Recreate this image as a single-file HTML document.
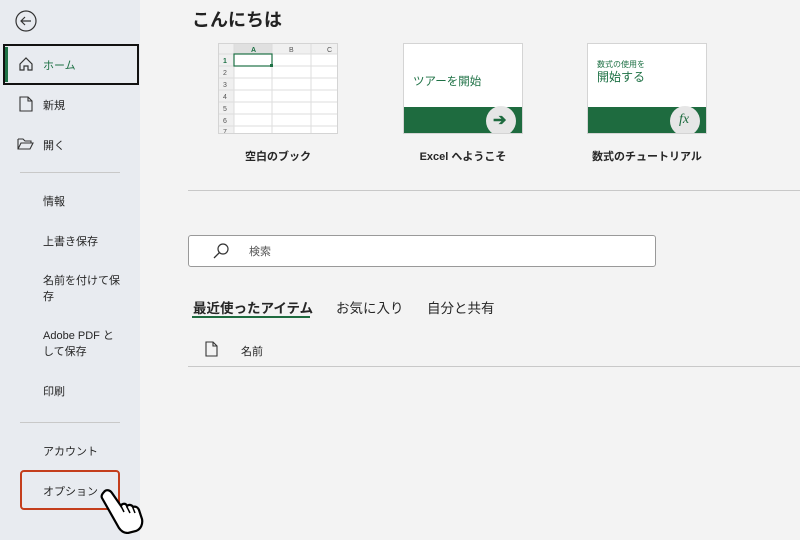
<!DOCTYPE html><html><head><meta charset="utf-8"><style>
*{margin:0;padding:0;box-sizing:border-box}
body{width:800px;height:540px;overflow:hidden;background:#f3f3f3;font-family:"Liberation Sans","Noto Sans CJK JP",sans-serif;color:#262626;position:relative}
.sb{position:absolute;left:0;top:0;width:140px;height:540px;background:#e8ebf0}
.a{position:absolute;font-size:11px;white-space:nowrap}
.hr{position:absolute;height:1px;background:#c8c8c8}
.th{position:absolute;width:120px;height:91px;background:#fff;border:1px solid #d4d4d4;overflow:hidden}
.lbl{position:absolute;font-size:11px;font-weight:bold;text-align:center;width:160px}
.tab{position:absolute;top:297px;font-size:13.5px}
</style></head><body>
<div class="sb"></div>
<svg style="position:absolute;left:14px;top:9px" width="24" height="24"><circle cx="12" cy="12" r="10" fill="none" stroke="#333" stroke-width="1.2"/><path d="M17 12H7M11 8l-4 4 4 4" fill="none" stroke="#333" stroke-width="1.2"/></svg>
<div style="position:absolute;left:3px;top:44px;width:136px;height:41px;border:2px solid #111"></div>
<div style="position:absolute;left:5px;top:47px;width:3px;height:35px;background:#1e7145"></div>
<svg style="position:absolute;left:18px;top:56px" width="16" height="16"><path d="M2 8L8 2l6 6v6h-4v-4H6v4H2z" fill="none" stroke="#333" stroke-width="1.2"/></svg>
<div class="a" style="left:43px;top:57px;color:#1e7145">ホーム</div>
<svg style="position:absolute;left:19px;top:96px" width="14" height="16"><path d="M1 1h8l4 4v10H1z M9 1v4h4" fill="none" stroke="#333" stroke-width="1.1"/></svg>
<div class="a" style="left:43px;top:97px">新規</div>
<svg style="position:absolute;left:17px;top:137px" width="18" height="14"><path d="M1 2h5l2 2h6v2 M1 2v10h12l3-6H4L1 12" fill="none" stroke="#333" stroke-width="1.1"/></svg>
<div class="a" style="left:43px;top:137px">開く</div>
<div class="hr" style="left:20px;top:172px;width:100px"></div>
<div class="a" style="left:43px;top:193px">情報</div>
<div class="a" style="left:43px;top:233px">上書き保存</div>
<div class="a" style="left:43px;top:273px;line-height:16px">名前を付けて保<br>存</div>
<div class="a" style="left:43px;top:328px;line-height:16px">Adobe PDF と<br>して保存</div>
<div class="a" style="left:43px;top:383px">印刷</div>
<div class="hr" style="left:20px;top:422px;width:100px"></div>
<div class="a" style="left:43px;top:443px">アカウント</div>
<div style="position:absolute;left:20px;top:470px;width:100px;height:40px;border:2px solid #c43e1c;border-radius:4px"></div>
<div class="a" style="left:43px;top:483px">オプション</div>
<svg style="position:absolute;left:96px;top:486px" width="52" height="48"><path d="M8 6c2-3 6-2 8 1l9 13c1-3 5-3 6 0 2-2 5-1 6 1 2-1 5 0 6 3l3 9c1 5-1 10-6 12l-8 2c-4 0-7-2-9-5L6 12C5 10 6 8 8 6z" fill="#fff" stroke="#000" stroke-width="2.2"/><path d="M25 20l3 6M31 21l3 6M37 22l2 5" stroke="#000" stroke-width="1.5"/></svg>

<div style="position:absolute;left:192px;top:6px;font-size:18px;font-weight:bold;color:#222">こんにちは</div>
<div class="th" style="left:218px;top:43px">
<svg width="120" height="91"><rect x="0" y="0" width="120" height="10" fill="#f0f0f0"/><rect x="15" y="0" width="38" height="10" fill="#e0e0e0"/><rect x="0" y="0" width="15" height="91" fill="#f0f0f0"/>
<g stroke="#ddd" stroke-width="1"><path d="M15 0v91M53 0v91M92 0v91"/><path d="M0 10h120M0 22h120M0 34h120M0 46h120M0 58h120M0 70h120M0 82h120"/></g>
<rect x="15" y="10" width="38" height="12" fill="none" stroke="#1e7145" stroke-width="1.2"/><rect x="51" y="20" width="3" height="3" fill="#1e7145"/>
<g font-size="7" fill="#555" font-family="Liberation Sans"><text x="32" y="8" fill="#1e7145" font-weight="bold">A</text><text x="70" y="8">B</text><text x="108" y="8">C</text><text x="4" y="19" fill="#1e7145" font-weight="bold">1</text><text x="4" y="31">2</text><text x="4" y="43">3</text><text x="4" y="55">4</text><text x="4" y="67">5</text><text x="4" y="79">6</text><text x="4" y="90">7</text></g></svg></div>
<div class="th" style="left:403px;top:43px">
<div style="position:absolute;left:9px;top:29px;font-size:11.5px;color:#1e7145">ツアーを開始</div>
<div style="position:absolute;left:0;top:63px;width:120px;height:28px;background:#1e6b3f"></div>
<div style="position:absolute;left:82px;top:62px;width:30px;height:30px;border-radius:50%;background:#e6e6e6"></div>
<div style="position:absolute;left:89px;top:66px;font-size:16px;font-weight:bold;color:#1e6b3f">➔</div></div>
<div class="th" style="left:587px;top:43px">
<div style="position:absolute;left:9px;top:15px;font-size:8px;color:#1e7145">数式の使用を</div>
<div style="position:absolute;left:9px;top:24px;font-size:12px;color:#1e7145">開始する</div>
<div style="position:absolute;left:0;top:63px;width:120px;height:28px;background:#1e6b3f"></div>
<div style="position:absolute;left:82px;top:62px;width:30px;height:30px;border-radius:50%;background:#e6e6e6"></div>
<div style="position:absolute;left:91px;top:68px;font-size:14px;font-style:italic;font-family:'Liberation Serif',serif;color:#1e6b3f">fx</div></div>
<div class="lbl" style="left:198px;top:148px">空白のブック</div>
<div class="lbl" style="left:383px;top:148px">Excel へようこそ</div>
<div class="lbl" style="left:567px;top:148px">数式のチュートリアル</div>
<div class="hr" style="left:188px;top:190px;width:612px"></div>
<div style="position:absolute;left:188px;top:235px;width:468px;height:32px;background:#fff;border:1px solid #999;border-radius:3px"></div>
<svg style="position:absolute;left:213px;top:243px" width="16" height="16"><circle cx="10" cy="6" r="5" fill="none" stroke="#333" stroke-width="1.2"/><path d="M6.5 9.5L1 15" stroke="#333" stroke-width="1.3"/></svg>
<div class="a" style="left:249px;top:243px;color:#555">検索</div>
<div class="tab" style="left:193px;font-weight:bold">最近使ったアイテム</div>
<div style="position:absolute;left:192px;top:316px;width:118px;height:2px;background:#1e6b3f"></div>
<div class="tab" style="left:336px">お気に入り</div>
<div class="tab" style="left:427px">自分と共有</div>
<svg style="position:absolute;left:205px;top:341px" width="13" height="16"><path d="M1 1h7l4 4v10H1z M8 1v4h4" fill="none" stroke="#333" stroke-width="1.1"/></svg>
<div class="a" style="left:241px;top:343px">名前</div>
<div class="hr" style="left:188px;top:366px;width:612px"></div>
</body></html>
